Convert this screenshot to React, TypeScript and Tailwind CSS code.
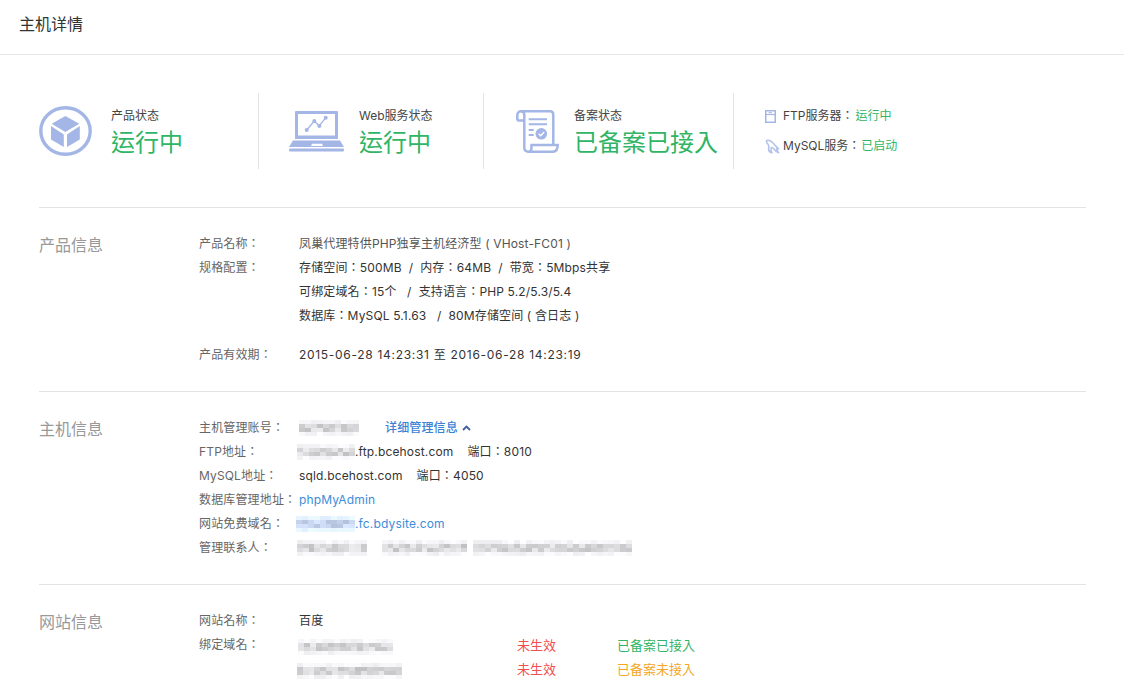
import React from 'react';

const font = { fontFamily: '"Inter", "Noto Sans CJK TC", "Noto Sans CJK SC", sans-serif' };

// pixelated stand-in for the masked values in the screenshot
const Mosaic: React.FC<{ width: number; seed: number; tint?: 'gray' | 'blue'; className?: string }> = ({
  width,
  seed,
  tint = 'gray',
  className = '',
}) => {
  const cols = Math.ceil(width / 6);
  let n = seed;
  const next = () => {
    n = (n * 9301 + 49297) % 233280;
    return n / 233280;
  };
  const cell = (row: number) => {
    const fringe = row !== 1;
    const v = Math.round((fringe ? 238 : 192) + next() * (fringe ? 16 : 44));
    return tint === 'blue' ? `rgb(${v - 16},${v - 2},${Math.min(v + 24, 255)})` : `rgb(${v},${v - 1},${v + 1})`;
  };
  return (
    <span className={`inline-flex flex-col align-middle ${className}`} style={{ width }}>
      {[0, 1, 1, 2].map((row, i) => (
        <span key={i} className="flex h-[4px]">
          {Array.from({ length: cols }).map((_, c) => (
            <span key={c} className="h-full flex-1" style={{ background: cell(row) }} />
          ))}
        </span>
      ))}
    </span>
  );
};

const CubeIcon = () => (
  <svg width="53" height="50" viewBox="0 0 53 50" fill="#a3b6e6">
    <ellipse cx="26.500" cy="25" rx="24.700" ry="23.300" fill="none" stroke="#a3b6e6" strokeWidth="3.400" />
    <path d="M26.300 10 40.300 17.700 26.300 26 12.700 17.700Z" />
    <path d="M12 20 24.800 28.500V41L12 33.500Z" />
    <path d="M40.800 20 28 28.500V41L40.800 33.500Z" />
  </svg>
);

const LaptopIcon = () => (
  <svg width="55" height="41" viewBox="0 0 55 41" fill="#a3b6e6">
    <path d="M6 1a1 1 0 0 1 1-1h41a1 1 0 0 1 1 1v27H6ZM9 3v21.500h37V3Z" fillRule="evenodd" />
    <path d="M4 29.500H51L55 36H0ZM23 32.700 22 35H34L33 32.700Z" fillRule="evenodd" />
    <rect x="0" y="37.500" width="55" height="3" rx="1.200" />
    <path d="M17.700 19 25.300 10 30.300 15 36.700 6.700" fill="none" stroke="#a3b6e6" strokeWidth="1.300" />
    <circle cx="17.700" cy="19" r="2" />
    <circle cx="25.300" cy="10" r="2" />
    <circle cx="30.300" cy="15" r="2" />
    <circle cx="36.700" cy="6.700" r="2" />
  </svg>
);

const RecordIcon = () => (
  <svg width="43" height="43" viewBox="0 0 43 43" fill="none" stroke="#a3b6e6" strokeWidth="2.500">
    <path d="M1.300 10.500V5C1.300 2.800 3 1.300 5 1.300H34C36 1.300 37.300 2.800 37.300 5V35" />
    <path d="M1.300 10.500H8.300M5 1.300C7 1.300 8.300 2.800 8.300 5V37.500C8.300 40 10 41.700 12.500 41.700H37C40 41.700 41.700 39 41.700 35H15.500V37.500C15.500 40 14.500 41.700 12.500 41.700" />
    <path d="M12.700 9.300H31M12.700 14.300H31" strokeWidth="2" />
    <path d="M12.700 20H17.700M12.700 25H17.700" strokeWidth="2" />
    <circle cx="25.300" cy="23.800" r="5.800" fill="#a3b6e6" stroke="none" />
    <path d="M22.700 23.800 24.700 25.800 28.200 22" stroke="#fff" strokeWidth="1.400" />
  </svg>
);

const ServerIcon = () => (
  <svg width="11" height="13" viewBox="0 0 11 13" fill="none" stroke="#a3b6e6" strokeWidth="1.500">
    <rect x=".75" y=".75" width="9.500" height="11.500" />
    <path d="M1 4.500H10" strokeWidth="1.200" />
    <path d="M3.500 2.700H7" strokeWidth="1" />
  </svg>
);

const DolphinIcon = () => (
  <svg width="15" height="15" viewBox="0 0 15 15" fill="none" stroke="#b4c3ea" strokeWidth="1.600" strokeLinejoin="round">
    <path d="M1.500 1.500C4 .8 6.500 2 8.300 4.300 10 6.500 11.800 8 13.500 9.800 12.800 10 12.300 10 11.500 9.800 12 11.300 12.500 12.500 13.500 13.800 11 13.300 9.800 11 8.300 9.300 7 8 6 8.300 6 10 6 11.500 6.300 12.800 7 13.800 4.500 13.300 3.300 11.300 3.700 9 4 7.300 3.700 6 2.800 5 2 4.200 1.500 3 1.500 1.500Z" />
  </svg>
);

const StatusItem: React.FC<{
  icon: React.ReactNode;
  label: string;
  value: string;
  className: string;
  iconBox: string;
}> = ({ icon, label, value, className, iconBox }) => (
  <div className={`flex h-[76px] items-center border-r border-[#e3e3e3] ${className}`}>
    <div className={`flex shrink-0 items-center ${iconBox}`}>{icon}</div>
    <div className="pt-[3px]">
      <div className="text-xs leading-[18px] text-[#444]">{label}</div>
      <div className="mt-[2px] text-2xl leading-[32px] text-[#2fb565]">{value}</div>
    </div>
  </div>
);

const Row: React.FC<{ label?: string; children: React.ReactNode; className?: string }> = ({
  label,
  children,
  className = '',
}) => (
  <div className={`flex h-6 items-center ${className}`}>
    <div className="w-[100px] shrink-0 text-[#666]">{label}</div>
    <div className="flex items-center whitespace-pre text-[#333]">{children}</div>
  </div>
);

const Section: React.FC<{ title: string; children: React.ReactNode; className?: string }> = ({
  title,
  children,
  className = '',
}) => (
  <section className={`flex border-t border-[#e3e3e3] ${className}`}>
    <h2 className="w-[160px] shrink-0 pt-[1px] text-base leading-6 text-[#999]">{title}</h2>
    <div className="flex-1 text-xs tracking-[.15px]">{children}</div>
  </section>
);

const App: React.FC = () => {
  return (
    <div className="h-[695px] overflow-hidden bg-white" style={font}>
      <header className="flex h-[55px] items-center border-b border-[#e8e8e8] pb-[6px] pl-[19px] text-base text-[#333]">
        主机详情
      </header>

      <div className="pl-[39px] pr-[38px]">
        <div className="flex h-[152px] items-start pt-[38px]">
          <StatusItem className="w-[220px]" iconBox="w-[72px]" icon={<CubeIcon />} label="产品状态" value="运行中" />
          <StatusItem className="w-[225px] pl-[30px]" iconBox="w-[70px]" icon={<LaptopIcon />} label="Web服务状态" value="运行中" />
          <StatusItem className="w-[250px] pl-[32px]" iconBox="w-[58px]" icon={<RecordIcon />} label="备案状态" value="已备案已接入" />
          <div className="flex h-[75px] flex-col pl-[31px] text-xs text-[#444]">
            <div className="mt-[14px] flex h-[18px] items-center">
              <span className="w-[18px]"><ServerIcon /></span>
              FTP服务器：<span className="ml-[2px] text-[#2fb565]">运行中</span>
            </div>
            <div className="mt-3 flex h-[18px] items-center">
              <span className="w-[18px]"><DolphinIcon /></span>
              MySQL服务： <span className="ml-[1px] text-[#2fb565]">已启动</span>
            </div>
          </div>
        </div>

        <Section title="产品信息" className="h-[184px] pt-6">
          <Row label="产品名称："><span className="text-[#555]">凤巢代理特供PHP独享主机经济型 ( VHost-FC01 )</span></Row>
          <Row label="规格配置：">存储空间：500MB  /  内存：64MB  /  带宽：5Mbps共享</Row>
          <Row>可绑定域名：15个   /  支持语言：PHP 5.2/5.3/5.4</Row>
          <Row>数据库：MySQL 5.1.63   /  80M存储空间 ( 含日志 )</Row>
          <Row label="产品有效期：" className="mt-[15px]">
            <span className="tracking-[.7px]">2015-06-28 14:23:31 至 2016-06-28 14:23:19</span>
          </Row>
        </Section>

        <Section title="主机信息" className="h-[193px] pt-6">
          <Row label="主机管理账号：">
            <Mosaic width={60} seed={7} />
            <span className="ml-[26px] flex items-center font-medium text-[#3b82d6]">
              详细管理信息
              <svg className="ml-[4px]" width="9" height="6" viewBox="0 0 9 6" fill="none" stroke="#3f5f9e" strokeWidth="1.800">
                <path d="M1 5 4.500 1.500 8 5" />
              </svg>
            </span>
          </Row>
          <Row label="FTP地址：">
            <Mosaic width={58} seed={21} className="-ml-[2px]" />
            .ftp.bcehost.com<span className="ml-[14px]">端口：8010</span>
          </Row>
          <Row label="MySQL地址：">sqld.bcehost.com<span className="ml-[14px]">端口：4050</span></Row>
          <Row label="数据库管理地址："><span className="text-[#3b8ddb]">phpMyAdmin</span></Row>
          <Row label="网站免费域名：">
            <Mosaic width={59} seed={33} tint="blue" className="-ml-[3px]" />
            <span className="text-[#3b8ddb]">.fc.bdysite.com</span>
          </Row>
          <Row label="管理联系人：">
            <Mosaic width={70} seed={45} className="-ml-[2px]" />
            <Mosaic width={85} seed={58} className="ml-[15px]" />
            <Mosaic width={159} seed={71} className="ml-[6px]" />
          </Row>
        </Section>

        <Section title="网站信息" className="pt-6">
          <Row label="网站名称：">百度</Row>
          <Row label="绑定域名：">
            <div className="flex items-center pt-[2px] text-[13px] tracking-normal">
              <span className="w-[218px]"><Mosaic width={95} seed={84} className="-ml-[1px]" /></span>
              <span className="w-[100px] text-[#f15050]">未生效</span>
              <span className="text-[#2fb565]">已备案已接入</span>
            </div>
          </Row>
          <Row className="mt-[1px]">
            <div className="flex items-center text-[13px] tracking-normal">
              <span className="w-[218px]"><Mosaic width={105} seed={97} className="-ml-[2px]" /></span>
              <span className="w-[100px] text-[#f15050]">未生效</span>
              <span className="text-[#f5a623]">已备案未接入</span>
            </div>
          </Row>
        </Section>
      </div>
    </div>
  );
};

export default App;
